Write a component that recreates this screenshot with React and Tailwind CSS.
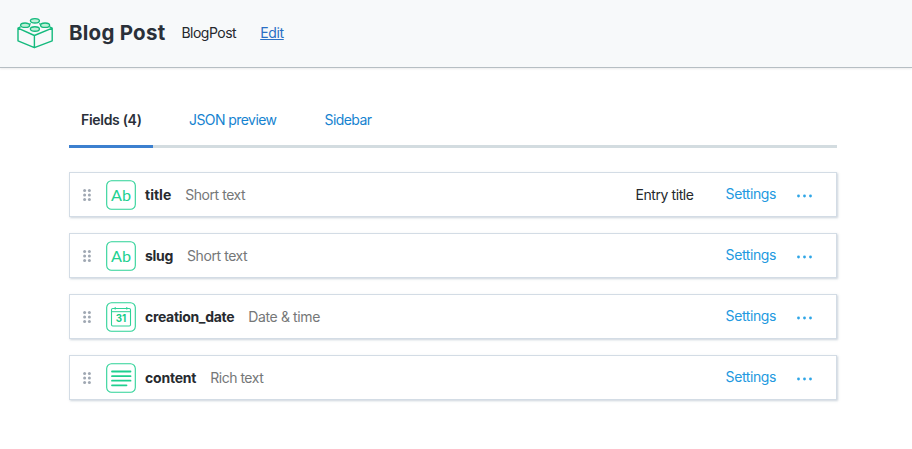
import React from "react";

const fields = [
  { name: "title", type: "Short text", icon: "text", entryTitle: true, nameCls: "tracking-[0px]", typeCls: "tracking-[-0.45px]" },
  { name: "slug", type: "Short text", icon: "text", nameCls: "tracking-[-0.3px]", typeCls: "tracking-[-0.42px]" },
  { name: "creation_date", type: "Date & time", icon: "date", nameCls: "tracking-[-0.32px]", typeCls: "tracking-[-0.37px]" },
  { name: "content", type: "Rich text", icon: "rich", nameCls: "tracking-[-0.22px]", typeCls: "tracking-[-0.48px]" },
];

function BrickIcon() {
  return (
    <svg width="36" height="32" viewBox="0 0 36 32" fill="none" stroke="#14ba7d" strokeWidth="1.4" strokeLinejoin="round" className="shrink-0">
      <path d="M3.6 9.9 1 11.2v12.6L17.4 30.7 35.2 23.8V11.2l-2.6-1.3M1 11.2l16.4 7.3L35.2 11.2M17.4 18.5V30.7M12.4 7.2l1.4-.6M22.2 6.6l1.4.6" />
      <g fill="#c0f0d8">
        <ellipse cx="17.9" cy="3.8" rx="4.5" ry="2.2" />
        <ellipse cx="8.1" cy="8.2" rx="4.5" ry="2.2" />
        <ellipse cx="28.1" cy="8.2" rx="4.5" ry="2.2" />
        <ellipse cx="17.9" cy="12" rx="4.5" ry="2.2" />
      </g>
    </svg>
  );
}

function FieldIcon({ kind }) {
  return (
    <svg width="30" height="30" viewBox="0 0 30 30" fill="none" stroke="#2dd297" className="shrink-0">
      <rect x="0.7" y="0.7" width="28.6" height="28.6" rx="4.8" strokeWidth="1.1" />
      {kind === "text" && (
        <text x="5" y="21" fill="#22d191" stroke="none" fontSize="15" textLength="20" lengthAdjust="spacingAndGlyphs" className="font-['Lato',sans-serif]">Ab</text>
      )}
      {kind === "date" && (
        <>
          <rect x="5.5" y="6.5" width="19" height="17.5" rx="1.2" strokeWidth="1.1" />
          <path d="M5.5 9.7h19M9.2 5v2.6M20.8 5v2.6" strokeWidth="1" />
          <text x="15" y="20" fill="#16cc88" stroke="none" textAnchor="middle" fontSize="10.5" fontWeight="700" textLength="10.5" lengthAdjust="spacingAndGlyphs" className="font-['Inter',sans-serif]">31</text>
        </>
      )}
      {kind === "rich" && (
        <path d="M6 8.5h18.5M6 13.2h18.5M6 17.7h18.5M6 22.3h14.5" stroke="#1fd08f" strokeWidth="1.8" strokeLinecap="round" />
      )}
    </svg>
  );
}

function DragHandle() {
  return (
    <svg width="8" height="12" viewBox="0 0 8 12" fill="#a0a8b3" className="shrink-0">
      {[1.6, 6, 10.4].map((y) => (
        <g key={y}>
          <circle cx="1.6" cy={y} r="1.5" />
          <circle cx="6.4" cy={y} r="1.5" />
        </g>
      ))}
    </svg>
  );
}

function FieldRow({ field }) {
  return (
    <div className="flex h-[45px] items-center border border-[#d3dce5] bg-white pl-[13px] pr-6 text-sm shadow-[1px_1px_2px_rgba(160,175,190,0.55)]">
      <DragHandle />
      <div className="ml-[15px]"><FieldIcon kind={field.icon} /></div>
      <span className={"ml-[9px] font-bold text-[#272a2f] " + field.nameCls}>{field.name}</span>
      <span className={"ml-3.5 text-[#757778] " + field.typeCls}>{field.type}</span>
      <div className="flex-1" />
      {field.entryTitle && <span className="mr-8 tracking-[-0.41px] text-[#25282c]">Entry title</span>}
      <a className="-mt-0.5 mr-[21px] tracking-[-0.4px] text-[#2299e0]">Settings</a>
      <svg width="15" height="4" viewBox="0 0 15 4" fill="#2ea5e6" className="mt-0.5 shrink-0">
        <circle cx="1.5" cy="2" r="1.4" />
        <circle cx="7.5" cy="2" r="1.4" />
        <circle cx="13.5" cy="2" r="1.4" />
      </svg>
    </div>
  );
}

export default function App() {
  return (
    <div className="h-[449px] w-[912px] overflow-hidden bg-white font-['Inter',sans-serif] text-sm text-[#2a3039]">
      <header className="flex h-[68px] items-center border-b border-[#b6bec3] bg-[#f7f9fa] pb-px pl-[17px] shadow-[0_1px_2px_rgba(0,0,0,0.08)]">
        <BrickIcon />
        <h1 className="ml-4 text-[20.5px] font-bold leading-6 tracking-[0.25px]">Blog Post</h1>
        <span className="ml-4 tracking-[-0.5px] text-[#25282c]">BlogPost</span>
        <a className="ml-6 tracking-[-0.35px] text-[#2a6fc4] underline">Edit</a>
      </header>
      <main className="ml-[69px] w-[768px] pt-[26px]">
        <nav className="flex h-[54px] border-b-[3px] border-[#d3dce0] leading-[52px]">
          <a className="h-[54px] w-[84px] border-b-[3px] border-[#3c80cf] pl-3 font-semibold tracking-[-0.3px]">Fields (4)</a>
          <a className="ml-9 tracking-[-0.57px] text-[#1683d0]">JSON preview</a>
          <a className="ml-12 tracking-[-0.55px] text-[#1683d0]">Sidebar</a>
        </nav>
        <div className="mt-6 flex flex-col gap-4">
          {fields.map((f) => <FieldRow key={f.name} field={f} />)}
        </div>
      </main>
    </div>
  );
}
